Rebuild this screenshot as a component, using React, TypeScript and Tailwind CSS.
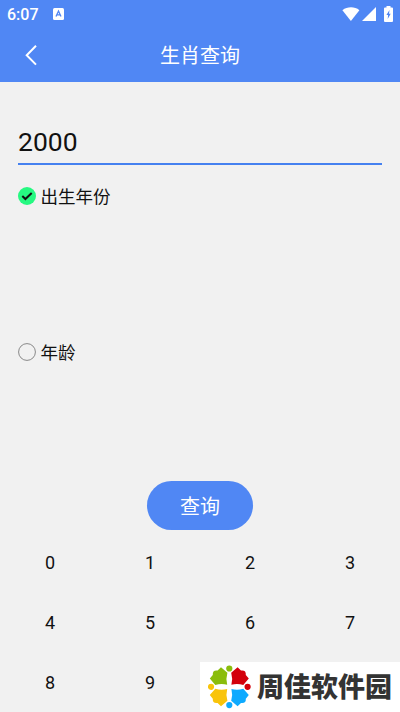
const digits = ['0', '1', '2', '3', '4', '5', '6', '7', '8', '9'];

const PETAL =
  'M-8.300-19.500-11.700-16.200Q-16.900-16.900-16.500-11.900L-19.500-8.300-14-1.900Q-8-3.700-2.100-2.100-3.700-8-1.900-14Z';

function StatusBar() {
  return (
    <div className="flex h-7 items-center pl-[7px] pr-[7px] text-white">
      <span className="pt-px text-[16px] font-medium leading-7">6:07</span>
      <svg className="ml-[14px]" width="11" height="12" viewBox="0 0 11 12">
        <rect width="11" height="12" rx="1.5" fill="#fff" />
        <path d="M3 8.6 5.5 3 8 8.6M3.9 6.9h3.2" fill="none" stroke="#5086f3" strokeWidth="1.3" />
      </svg>
      <div className="ml-auto flex items-center">
        <svg width="18" height="14" viewBox="0 0 18 14">
          <path d="M.4 3.2C5.400-.6 12.600-.6 17.400 3.200L8.900 14Z" fill="#fff" />
        </svg>
        <svg className="ml-[2px]" width="14" height="14" viewBox="0 0 14 14">
          <path d="M14 0v14H0Z" fill="#fff" />
        </svg>
        <svg className="ml-2" width="9" height="16" viewBox="0 0 9 16">
          <path d="M2.500 1.500V0h4v1.500H8q1 0 1 1V15q0 1-1 1H1q-1 0-1-1V2.500q0-1 1-1Z" fill="#fff" />
          <path d="M5.500 4 2.400 9h1.700L3.700 13 6.700 7.800H5Z" fill="#5086f3" />
        </svg>
      </div>
    </div>
  );
}

function Header() {
  return (
    <header className="h-[82px] bg-[#5087f4] text-white">
      <StatusBar />
      <div className="grid h-[54px] grid-cols-[60px_1fr_60px] items-center">
        <svg className="ml-[25px]" width="12" height="21" viewBox="0 0 12 21">
          <path d="M11 .8 1.700 10.200 11 19.600" fill="none" stroke="#fff" strokeWidth="2" />
        </svg>
        <h1 className="pt-[2px] text-center text-[20px] leading-[52px]">生肖查询</h1>
      </div>
    </header>
  );
}

function Option({ label, checked }: { label: string; checked?: boolean }) {
  return (
    <div className="flex h-[156px] items-start">
      <div className="flex h-7 items-center">
        <svg className="-ml-[0.500px]" width="18" height="18" viewBox="0 0 18 18">
          {checked ? (
            <>
              <circle cx="9" cy="9" r="9" fill="#26f981" />
              <path d="m4.300 9 3.100 3 6.300-5.900" fill="none" stroke="#111" strokeWidth="2" />
            </>
          ) : (
            <circle cx="9" cy="9" r="8.400" fill="none" stroke="#888" strokeWidth="1" />
          )}
        </svg>
        <span className="ml-[5px] pt-[2px] text-[17.500px] leading-7">{label}</span>
      </div>
    </div>
  );
}

function Watermark() {
  return (
    <div className="absolute bottom-0 right-0 flex h-[50px] w-[200px] items-center bg-white">
      <svg className="ml-2 shrink-0" width="44" height="44" viewBox="0 0 44 44">
        {/* four figures around a white cross */}
        <g transform="translate(21.300 21.800)">
          <path d={PETAL} fill="#8abd0b" />
          <path d={PETAL} fill="#d3000b" transform="scale(-1 1)" />
          <path d={PETAL} fill="#0eaaff" transform="scale(-1 -1)" />
          <path d={PETAL} fill="#f9c40b" transform="scale(1 -1)" />
          <circle cx="0" cy="-18.300" r="3.100" fill="#8abd0b" />
          <circle cx="18.300" cy="0" r="3.100" fill="#d3000b" />
          <circle cx="0" cy="18.300" r="3.100" fill="#0eaaff" />
          <circle cx="-18.300" cy="0" r="3.100" fill="#f9c40b" />
        </g>
      </svg>
      <span className="ml-[5px] whitespace-nowrap pt-[2px] text-[27px] font-black leading-[50px] text-[#333]">
        周佳软件园
      </span>
    </div>
  );
}

export default function App() {
  return (
    <div className="relative flex h-[712px] w-[400px] flex-col overflow-hidden bg-[#f1f1f1] font-[Roboto,'Noto_Sans_CJK_SC',sans-serif] text-[#111]">
      <Header />
      <main className="flex flex-col px-[18px] pt-10">
        <div className="h-[43px] border-b-2 border-[#4581f0] text-[26.500px] leading-[39px]">2000</div>
        <div className="mt-[17px]">
          <Option label="出生年份" checked />
          <Option label="年龄" />
        </div>
      </main>
      <button className="-mt-[13px] ml-[147px] h-[49px] w-[106px] shrink-0 rounded-full bg-[#5087f4] pt-[2px] text-[20px] text-white">
        查询
      </button>
      <div className="mt-[3px] grid grid-cols-4">
        {digits.map((d) => (
          <div key={d} className="h-[60px] text-center text-[18px] leading-[60px]">
            {d}
          </div>
        ))}
      </div>
      <Watermark />
    </div>
  );
}
